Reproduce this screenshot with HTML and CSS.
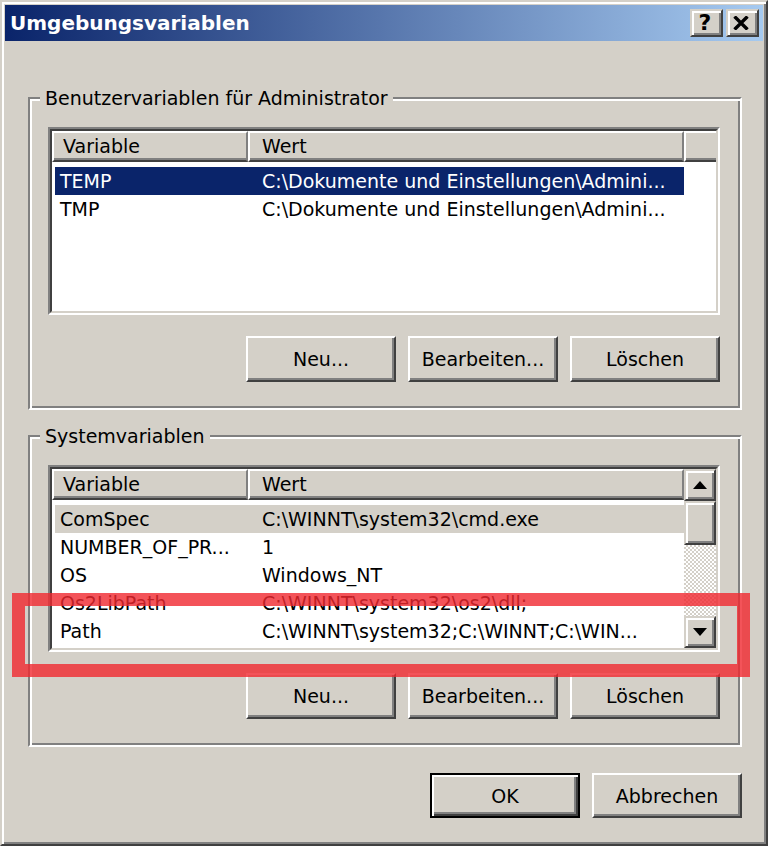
FILE: index.html
```html
<!DOCTYPE html>
<html lang="de">
<head>
<meta charset="utf-8">
<title>Umgebungsvariablen</title>
<link rel="stylesheet" href="styles.css">
</head>
<body>
<div class="window">
  <div class="titlebar">
    <span class="title">Umgebungsvariablen</span>
    <div class="caption-buttons">
      <button class="cap-btn help">?</button>
      <button class="cap-btn close"><svg width="16" height="14" viewBox="0 0 16 14"><path d="M1.5 0.5 L14.5 13.5 M14.5 0.5 L1.5 13.5" stroke="#000" stroke-width="3.4" fill="none"/></svg></button>
    </div>
  </div>
  <div class="client">
    <fieldset class="group">
      <legend>Benutzervariablen für Administrator</legend>
      <div class="group-body">
        <div class="listview user-list">
          <div class="lv-inner">
            <div class="lv-main">
              <div class="lv-header">
                <div class="hcell col-var">Variable</div>
                <div class="hcell col-val">Wert</div>
                <div class="hcell col-rest"></div>
              </div>
              <div class="lv-rows">
                <div class="row selected"><span class="c1">TEMP</span><span class="c2">C:\Dokumente und Einstellungen\Admini...</span></div>
                <div class="row"><span class="c1">TMP</span><span class="c2">C:\Dokumente und Einstellungen\Admini...</span></div>
              </div>
            </div>
          </div>
        </div>
        <div class="btn-row">
          <button class="btn">Neu...</button>
          <button class="btn">Bearbeiten...</button>
          <button class="btn">Löschen</button>
        </div>
      </div>
    </fieldset>
    <fieldset class="group group-sys">
      <legend>Systemvariablen</legend>
      <div class="group-body">
        <div class="listview sys-list">
          <div class="lv-inner">
            <div class="lv-main">
              <div class="lv-header">
                <div class="hcell col-var">Variable</div>
                <div class="hcell col-val">Wert</div>
              </div>
              <div class="lv-rows">
                <div class="row inactive"><span class="c1">ComSpec</span><span class="c2">C:\WINNT\system32\cmd.exe</span></div>
                <div class="row"><span class="c1">NUMBER_OF_PR...</span><span class="c2">1</span></div>
                <div class="row"><span class="c1">OS</span><span class="c2">Windows_NT</span></div>
                <div class="row"><span class="c1">Os2LibPath</span><span class="c2">C:\WINNT\system32\os2\dll;</span></div>
                <div class="row"><span class="c1">Path</span><span class="c2">C:\WINNT\system32;C:\WINNT;C:\WIN...</span></div>
              </div>
            </div>
            <div class="scrollbar">
              <div class="sb-btn"><svg width="14" height="8" viewBox="0 0 14 8"><polygon points="0,8 7,0 14,8" fill="#000"/></svg></div>
              <div class="sb-thumb"></div>
              <div class="sb-track"></div>
              <div class="sb-btn"><svg width="14" height="8" viewBox="0 0 14 8"><polygon points="0,0 14,0 7,8" fill="#000"/></svg></div>
            </div>
          </div>
        </div>
        <div class="btn-row">
          <button class="btn">Neu...</button>
          <button class="btn">Bearbeiten...</button>
          <button class="btn">Löschen</button>
        </div>
      </div>
    </fieldset>
    <div class="footer">
      <button class="btn btn-default">OK</button>
      <button class="btn">Abbrechen</button>
    </div>
  </div>
  <div class="highlight"></div>
</div>
</body>
</html>
```
FILE: styles.css
```css
* {
  box-sizing: border-box;
}

html, body {
  margin: 0;
  padding: 0;
}

body {
  background: #d4d0c8;
  font-family: "DejaVu Sans", Verdana, sans-serif;
  font-size: 19px;
  color: #000;
}

.window {
  position: relative;
  width: 768px;
  height: 846px;
  background: #d4d0c8;
  border: 2px solid;
  border-color: #d4d0c8 #404040 #404040 #d4d0c8;
  box-shadow: inset 2px 2px #fff, inset -2px -2px #808080;
  padding: 3px;
  display: flex;
  flex-direction: column;
}

.titlebar {
  height: 36px;
  flex: none;
  display: flex;
  align-items: center;
  justify-content: space-between;
  padding: 0 4px 0 5px;
  background: linear-gradient(to right, #0a246a, #a6caf0);
}

.title {
  font-family: "DejaVu Sans", Verdana, sans-serif;
  font-weight: bold;
  font-size: 20px;
  line-height: 36px;
  color: #fff;
  white-space: nowrap;
}

.caption-buttons {
  display: flex;
  gap: 3px;
}

.cap-btn {
  width: 33px;
  height: 28px;
  padding: 0;
  margin: 0;
  background: #d4d0c8;
  border: 2px solid;
  border-color: #d4d0c8 #404040 #404040 #d4d0c8;
  box-shadow: inset 2px 2px #fff, inset -2px -2px #808080;
  display: flex;
  align-items: center;
  justify-content: center;
  font-family: "DejaVu Sans", Verdana, sans-serif;
  font-weight: bold;
  font-size: 22px;
  line-height: 1;
  color: #000;
}

.cap-btn.help {
  padding-right: 3px;
}

.cap-btn.close {
  padding-right: 4px;
}

.cap-btn svg {
  display: block;
}

.client {
  flex: 1;
  display: flex;
  flex-direction: column;
  padding: 45px 21px 0 23px;
}

.group {
  margin: 0;
  padding: 0;
  min-width: 0;
  border: 2px solid;
  border-color: #808080 #fff #fff #808080;
  box-shadow: inset 2px 2px #fff, inset -2px -2px #808080;
}

.group legend {
  margin-left: 10px;
  padding: 0 5px;
  line-height: 24px;
  font-size: 19px;
  background: #d4d0c8;
}

.group-sys {
  margin-top: 14px;
}

.group-body {
  padding: 17px 20px 26px 18px;
}

.listview {
  border: 2px solid;
  border-color: #808080 #fff #fff #808080;
  background: #fff;
}

.user-list {
  height: 188px;
}

.sys-list {
  height: 187px;
}

.lv-inner {
  height: 100%;
  border: 2px solid;
  border-color: #404040 #d4d0c8 #d4d0c8 #404040;
  display: flex;
}

.lv-main {
  flex: 1;
  min-width: 0;
  display: flex;
  flex-direction: column;
}

.lv-header {
  display: flex;
  height: 31px;
  flex: none;
}

.hcell {
  height: 31px;
  background: #d4d0c8;
  border-style: solid;
  border-width: 2px;
  border-color: #fff #808080 #404040 #fff;
  box-shadow: inset 0 -2px #808080;
  line-height: 27px;
  padding-left: 9px;
  white-space: nowrap;
}

.col-var {
  width: 196px;
}

.col-val {
  width: 436px;
  padding-left: 12px;
}

.col-rest {
  flex: 1;
  border-right: 0;
}

.lv-rows {
  padding-top: 5px;
}

.row {
  display: flex;
  width: 629px;
  height: 28px;
  line-height: 28px;
  margin-left: 3px;
  white-space: nowrap;
}

.row.selected {
  background: #0a246a;
  color: #fff;
}

.row.inactive {
  background: #d4d0c8;
}

.c1 {
  width: 193px;
  padding-left: 5px;
  overflow: hidden;
}

.c2 {
  width: 436px;
  padding-left: 14px;
  overflow: hidden;
}

.scrollbar {
  width: 32px;
  flex: none;
  display: flex;
  flex-direction: column;
}

.sb-btn,
.sb-thumb {
  background: #d4d0c8;
  border: 2px solid;
  border-color: #d4d0c8 #404040 #404040 #d4d0c8;
  box-shadow: inset 2px 2px #fff, inset -2px -2px #808080;
}

.sb-btn {
  height: 32px;
  flex: none;
  display: flex;
  align-items: center;
  justify-content: center;
}

.sb-btn svg {
  display: block;
}

.sb-thumb {
  height: 44px;
  flex: none;
}

.sb-track {
  flex: 1;
  background-color: #fff;
  background-image: repeating-conic-gradient(#d4d0c8 0% 25%, #fff 0% 50%);
  background-size: 4px 4px;
}

.btn-row {
  display: flex;
  justify-content: flex-end;
  gap: 12px;
  margin-top: 21px;
}

.btn {
  width: 150px;
  height: 46px;
  margin: 0;
  padding: 0;
  font-family: "DejaVu Sans", Verdana, sans-serif;
  font-size: 19px;
  color: #000;
  background: #d4d0c8;
  border: 2px solid;
  border-color: #fff #404040 #404040 #fff;
  box-shadow: inset -2px -2px #808080;
}

.footer {
  display: flex;
  justify-content: flex-end;
  gap: 12px;
  margin-top: 26px;
}

.footer .btn {
  height: 45px;
}

.btn-default {
  border-color: #000;
  box-shadow: inset 2px 2px #fff, inset -2px -2px #404040, inset -4px -4px #808080;
}

.highlight {
  position: absolute;
  left: 10px;
  top: 591px;
  width: 738px;
  height: 84px;
  border: 13px solid rgba(240, 40, 48, 0.8);
  pointer-events: none;
}
```
